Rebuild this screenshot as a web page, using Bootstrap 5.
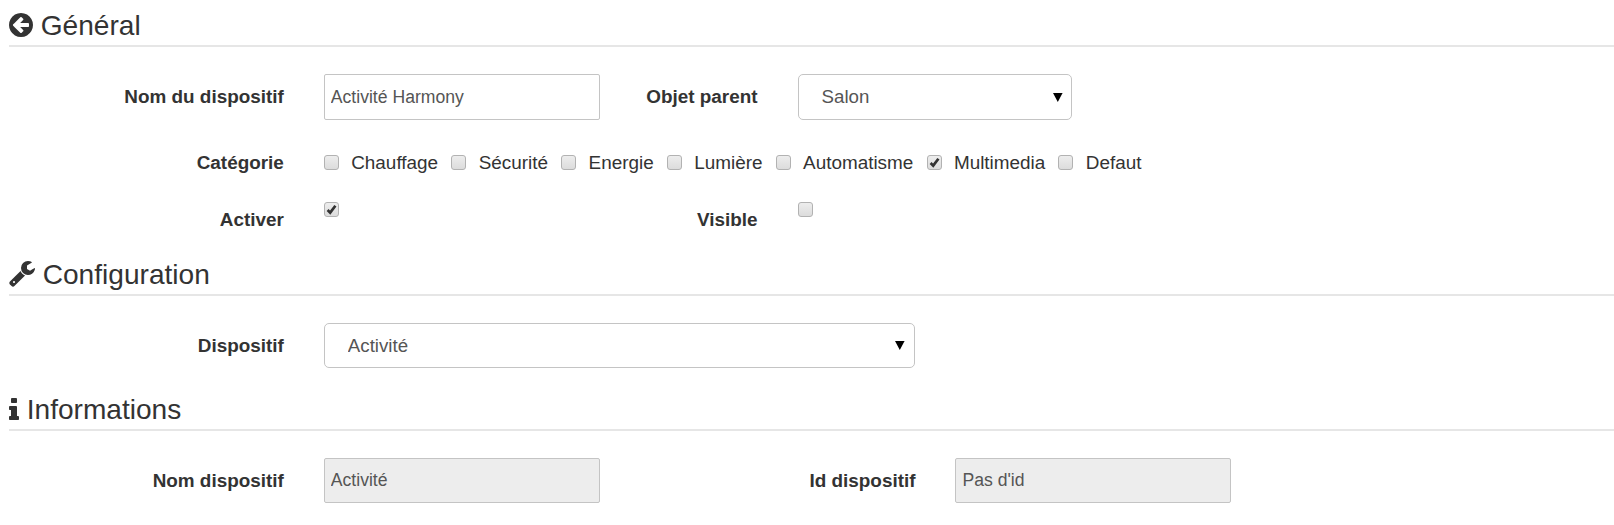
<!DOCTYPE html>
<html lang="fr">
<head>
<meta charset="utf-8">
<title>Activité Harmony</title>
<link href="https://cdn.jsdelivr.net/npm/bootstrap@5.3.0/dist/css/bootstrap.min.css" rel="stylesheet">
<style>
body{font-family:"Liberation Sans",Arial,sans-serif;font-size:18.9px;line-height:26px;color:#333;background:#fff}
.page{height:525px;padding:5px 0 0 9px}
.sheet{width:1874px}
.sheet .row{--bs-gutter-x:40px;margin-left:-21px;width:1895px}
.title{font-size:28.1px;line-height:40px;height:42px;border-bottom:2px solid #e6e6e6;margin:0 0 27px;font-weight:400}
.title svg{fill:#333;flex:none;margin-left:-.3px}
.title span{margin-top:1px}
.icon-flip{transform:scale(1,-1)}
.field-label{font-weight:700;text-align:right;white-space:nowrap}
.form-control,.form-select{height:45px;color:#555;border:1px solid #c4c4c4;border-radius:2px;padding:0 6px;font-size:17.6px;background-color:#fff;line-height:26px}
.form-select{font-size:18.7px;border-radius:5px;padding-left:23px;background-image:url("data:image/svg+xml,%3Csvg xmlns='http://www.w3.org/2000/svg' viewBox='0 0 10 9'%3E%3Cpath d='M0 0h9.6L4.8 9z'/%3E%3C/svg%3E");background-size:10px 9px;background-position:right 9px center}
.tall{height:46px}
select.tall{width:274.5px;background-position:right 8px center}
.form-control:disabled{background:#ededed;opacity:1;-webkit-text-fill-color:#555}
.tick{appearance:none;flex:none;width:15px;height:15px;margin:0;border:1px solid #b2b2b2;border-radius:3px;background:linear-gradient(#ededed,#dcdcdc)}
.tick:checked{background:url("data:image/svg+xml,%3Csvg xmlns='http://www.w3.org/2000/svg' viewBox='0 0 13 13'%3E%3Cpath d='M2.6 7l2.6 2.6L10.4 2.8' fill='none' stroke='%23333' stroke-width='2.7'/%3E%3C/svg%3E"),linear-gradient(#ededed,#dcdcdc)}
.choice{gap:12.4px;margin-right:13.2px}
.choice .tick{margin-bottom:2px}
.line-cat{margin-top:30px}
.line-state{margin-top:26px}
.line-state .field-label{padding-top:5px}
</style>
</head>
<body>
<main class="page overflow-hidden">
<form class="sheet">
  <section style="height:249px">
    <h2 class="title d-flex align-items-center"><svg width="24" height="24" viewBox="0 -1408 1536 1536"><path class="icon-flip" fill-rule="evenodd" d="M1280 704v-128q0 -26 -19 -45t-45 -19h-502l189 -189q19 -19 19 -45t-19 -45l-91 -91q-18 -18 -45 -18t-45 18l-362 362l-91 91q-18 18 -18 45t18 45l91 91l362 362q18 18 45 18t45 -18l91 -91q18 -18 18 -45t-18 -45l-189 -189h502q26 0 45 -19t19 -45zM1536 640q0 -209 -103 -385.5t-279.5 -279.5t-385.5 -103t-385.5 103t-279.5 279.5t-103 385.5t103 385.5t279.5 279.5t385.5 103t385.5 -103t279.5 -279.5t103 -385.5z"/></svg><span class="ms-2">Général</span></h2>
    <div class="row align-items-center">
      <label class="col-2 field-label" for="name">Nom du dispositif</label>
      <div class="col-2"><input id="name" class="form-control tall" value="Activité Harmony"></div>
      <label class="col-1 field-label d-flex justify-content-end" for="parent">Objet parent</label>
      <div class="col-2"><select id="parent" class="form-select tall"><option>Salon</option></select></div>
    </div>
    <div class="row line-cat">
      <span class="col-2 field-label">Catégorie</span>
      <div class="col-9 d-flex">
        <label class="choice d-flex align-items-center"><input type="checkbox" class="tick">Chauffage</label>
        <label class="choice d-flex align-items-center"><input type="checkbox" class="tick">Sécurité</label>
        <label class="choice d-flex align-items-center"><input type="checkbox" class="tick">Energie</label>
        <label class="choice d-flex align-items-center"><input type="checkbox" class="tick">Lumière</label>
        <label class="choice d-flex align-items-center"><input type="checkbox" class="tick">Automatisme</label>
        <label class="choice d-flex align-items-center"><input type="checkbox" class="tick" checked>Multimedia</label>
        <label class="choice d-flex align-items-center"><input type="checkbox" class="tick">Defaut</label>
      </div>
    </div>
    <div class="row line-state">
      <label class="col-2 field-label" for="active">Activer</label>
      <div class="col-2 d-flex"><input id="active" type="checkbox" class="tick" checked></div>
      <label class="col-1 field-label" for="visible">Visible</label>
      <div class="col-2 d-flex"><input id="visible" type="checkbox" class="tick"></div>
    </div>
  </section>
  <section style="height:135px">
    <h2 class="title d-flex align-items-center"><svg width="26" height="26" viewBox="0 -1408 1664 1664"><path class="icon-flip" fill-rule="evenodd" d="M384 64q0 26 -19 45t-45 19t-45 -19t-19 -45t19 -45t45 -19t45 19t19 45zM1028 484l-682 -682q-37 -37 -90 -37q-52 0 -91 37l-106 108q-38 36 -38 90q0 53 38 91l681 681q39 -98 114.5 -173.5t173.5 -114.5zM1662 919q0 -39 -23 -106q-47 -134 -164.5 -217.5t-258.5 -83.5q-185 0 -316.5 131.5t-131.5 316.5t131.5 316.5t316.5 131.5q58 0 121.5 -16.5t107.5 -46.5q16 -11 16 -28t-16 -28l-293 -169v-224l193 -107q5 3 79 48.5t135.5 81t70.5 35.5q15 0 23.5 -10t8.5 -25z"/></svg><span class="ms-2">Configuration</span></h2>
    <div class="row align-items-center">
      <label class="col-2 field-label" for="device">Dispositif</label>
      <div class="col-4"><select id="device" class="form-select"><option>Activité</option></select></div>
    </div>
  </section>
  <section>
    <h2 class="title d-flex align-items-center"><svg width="10" height="22" viewBox="0 -1408 640 1408"><path class="icon-flip" d="M640 192v-128q0 -26 -19 -45t-45 -19h-512q-26 0 -45 19t-19 45v128q0 26 19 45t45 19h64v384h-64q-26 0 -45 19t-19 45v128q0 26 19 45t45 19h384q26 0 45 -19t19 -45v-576h64q26 0 45 -19t19 -45zM512 1344v-192q0 -26 -19 -45t-45 -19h-256q-26 0 -45 19t-19 45v192q0 26 19 45t45 19h256q26 0 45 -19t19 -45z"/></svg><span class="ms-2">Informations</span></h2>
    <div class="row align-items-center">
      <label class="col-2 field-label" for="devname">Nom dispositif</label>
      <div class="col-2"><input id="devname" class="form-control" value="Activité" disabled></div>
      <label class="col-2 field-label" for="devid">Id dispositif</label>
      <div class="col-2"><input id="devid" class="form-control" value="Pas d'id" disabled></div>
    </div>
  </section>
</form>
</main>
<script src="https://cdn.jsdelivr.net/npm/bootstrap@5.3.0/dist/js/bootstrap.bundle.min.js"></script>
</body>
</html>
